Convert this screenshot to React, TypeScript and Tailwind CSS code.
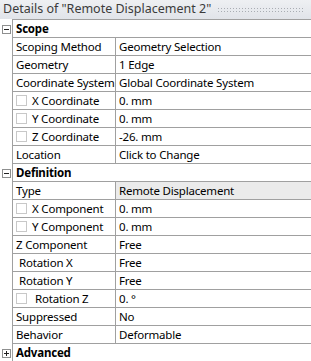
import React from "react";

type Row = {
  name: string;
  value: string;
  check?: boolean;
  indent?: boolean;
  shaded?: boolean;
};

type Section = {
  title: string;
  open: boolean;
  rows: Row[];
};

const SECTIONS: Section[] = [
  {
    title: "Scope",
    open: true,
    rows: [
      { name: "Scoping Method", value: "Geometry Selection" },
      { name: "Geometry", value: "1 Edge" },
      { name: "Coordinate System", value: "Global Coordinate System" },
      { name: "X Coordinate", value: "0. mm", check: true },
      { name: "Y Coordinate", value: "0. mm", check: true },
      { name: "Z Coordinate", value: "-26. mm", check: true },
      { name: "Location", value: "Click to Change" },
    ],
  },
  {
    title: "Definition",
    open: true,
    rows: [
      { name: "Type", value: "Remote Displacement", shaded: true },
      { name: "X Component", value: "0. mm", check: true },
      { name: "Y Component", value: "0. mm", check: true },
      { name: "Z Component", value: "Free" },
      { name: "Rotation X", value: "Free", indent: true },
      { name: "Rotation Y", value: "Free", indent: true },
      { name: "Rotation Z", value: "0. °", check: true, indent: true },
      { name: "Suppressed", value: "No" },
      { name: "Behavior", value: "Deformable" },
    ],
  },
  { title: "Advanced", open: false, rows: [] },
];

const ToggleBox = ({ open }: { open: boolean }) => (
  <div className="w-[9px] h-[9px] border border-[#8e8f8f] bg-white flex items-center justify-center">
    <svg width="7" height="7" viewBox="0 0 7 7">
      <path d="M1 3.5H6" stroke="#222" strokeWidth="1" />
      {!open && <path d="M3.5 1V6" stroke="#222" strokeWidth="1" />}
    </svg>
  </div>
);

const PropRow = ({ row }: { row: Row }) => (
  <div className="flex h-[18px]">
    <div className="w-[12px] shrink-0 bg-white" />
    <div className="flex-1 flex border-l border-b border-[#a0a0a0]">
      <div className="w-[103px] shrink-0 flex items-center border-r border-[#a0a0a0] pl-[3px] overflow-hidden whitespace-nowrap">
        {row.check && (
          <span className="w-[11px] h-[11px] border border-[#c8c8c8] bg-white shrink-0 mr-[5px]" />
        )}
        <span className={row.indent ? "pl-[3px]" : ""}>{row.name}</span>
      </div>
      <div
        className={`flex-1 flex items-center pl-[3px] whitespace-nowrap ${
          row.shaded ? "bg-[#ebebeb]" : "bg-white"
        }`}
      >
        {row.value}
      </div>
    </div>
  </div>
);

export default function App() {
  return (
    <div
      className="w-[311px] h-[361px] bg-white overflow-hidden text-[11.5px] tracking-[-0.2px] text-black leading-none"
      style={{ fontFamily: "'Noto Sans', 'Open Sans', sans-serif" }}
    >
      <div className="h-[19px] flex items-center bg-gradient-to-b from-[#eef0f3] to-[#e1e4e9] pl-[3px] text-[#3b3b3b] text-[12.5px] tracking-normal">
        <span className="whitespace-nowrap">Details of "Remote Displacement 2"</span>
        <div
          className="ml-[6px] mr-[6px] flex-1 h-[5px]"
          style={{
            backgroundImage:
              "radial-gradient(circle, #a9adb3 0.7px, transparent 0.8px)",
            backgroundSize: "3px 3px",
          }}
        />
      </div>
      <div className="flex h-[1px]">
        <div className="w-[12px] shrink-0 bg-white" />
        <div className="flex-1 bg-[#a0a0a0]" />
      </div>
      {SECTIONS.map((s) => (
        <div key={s.title}>
          <div className="flex h-[18px]">
            <div className="w-[12px] shrink-0 flex items-center justify-start pl-[2px] bg-white">
              <ToggleBox open={s.open} />
            </div>
            <div className="flex-1 flex items-center border-l border-b border-[#a0a0a0] pl-[3px] font-bold">
              {s.title}
            </div>
          </div>
          {s.open && s.rows.map((r) => <PropRow key={r.name} row={r} />)}
        </div>
      ))}
    </div>
  );
}
